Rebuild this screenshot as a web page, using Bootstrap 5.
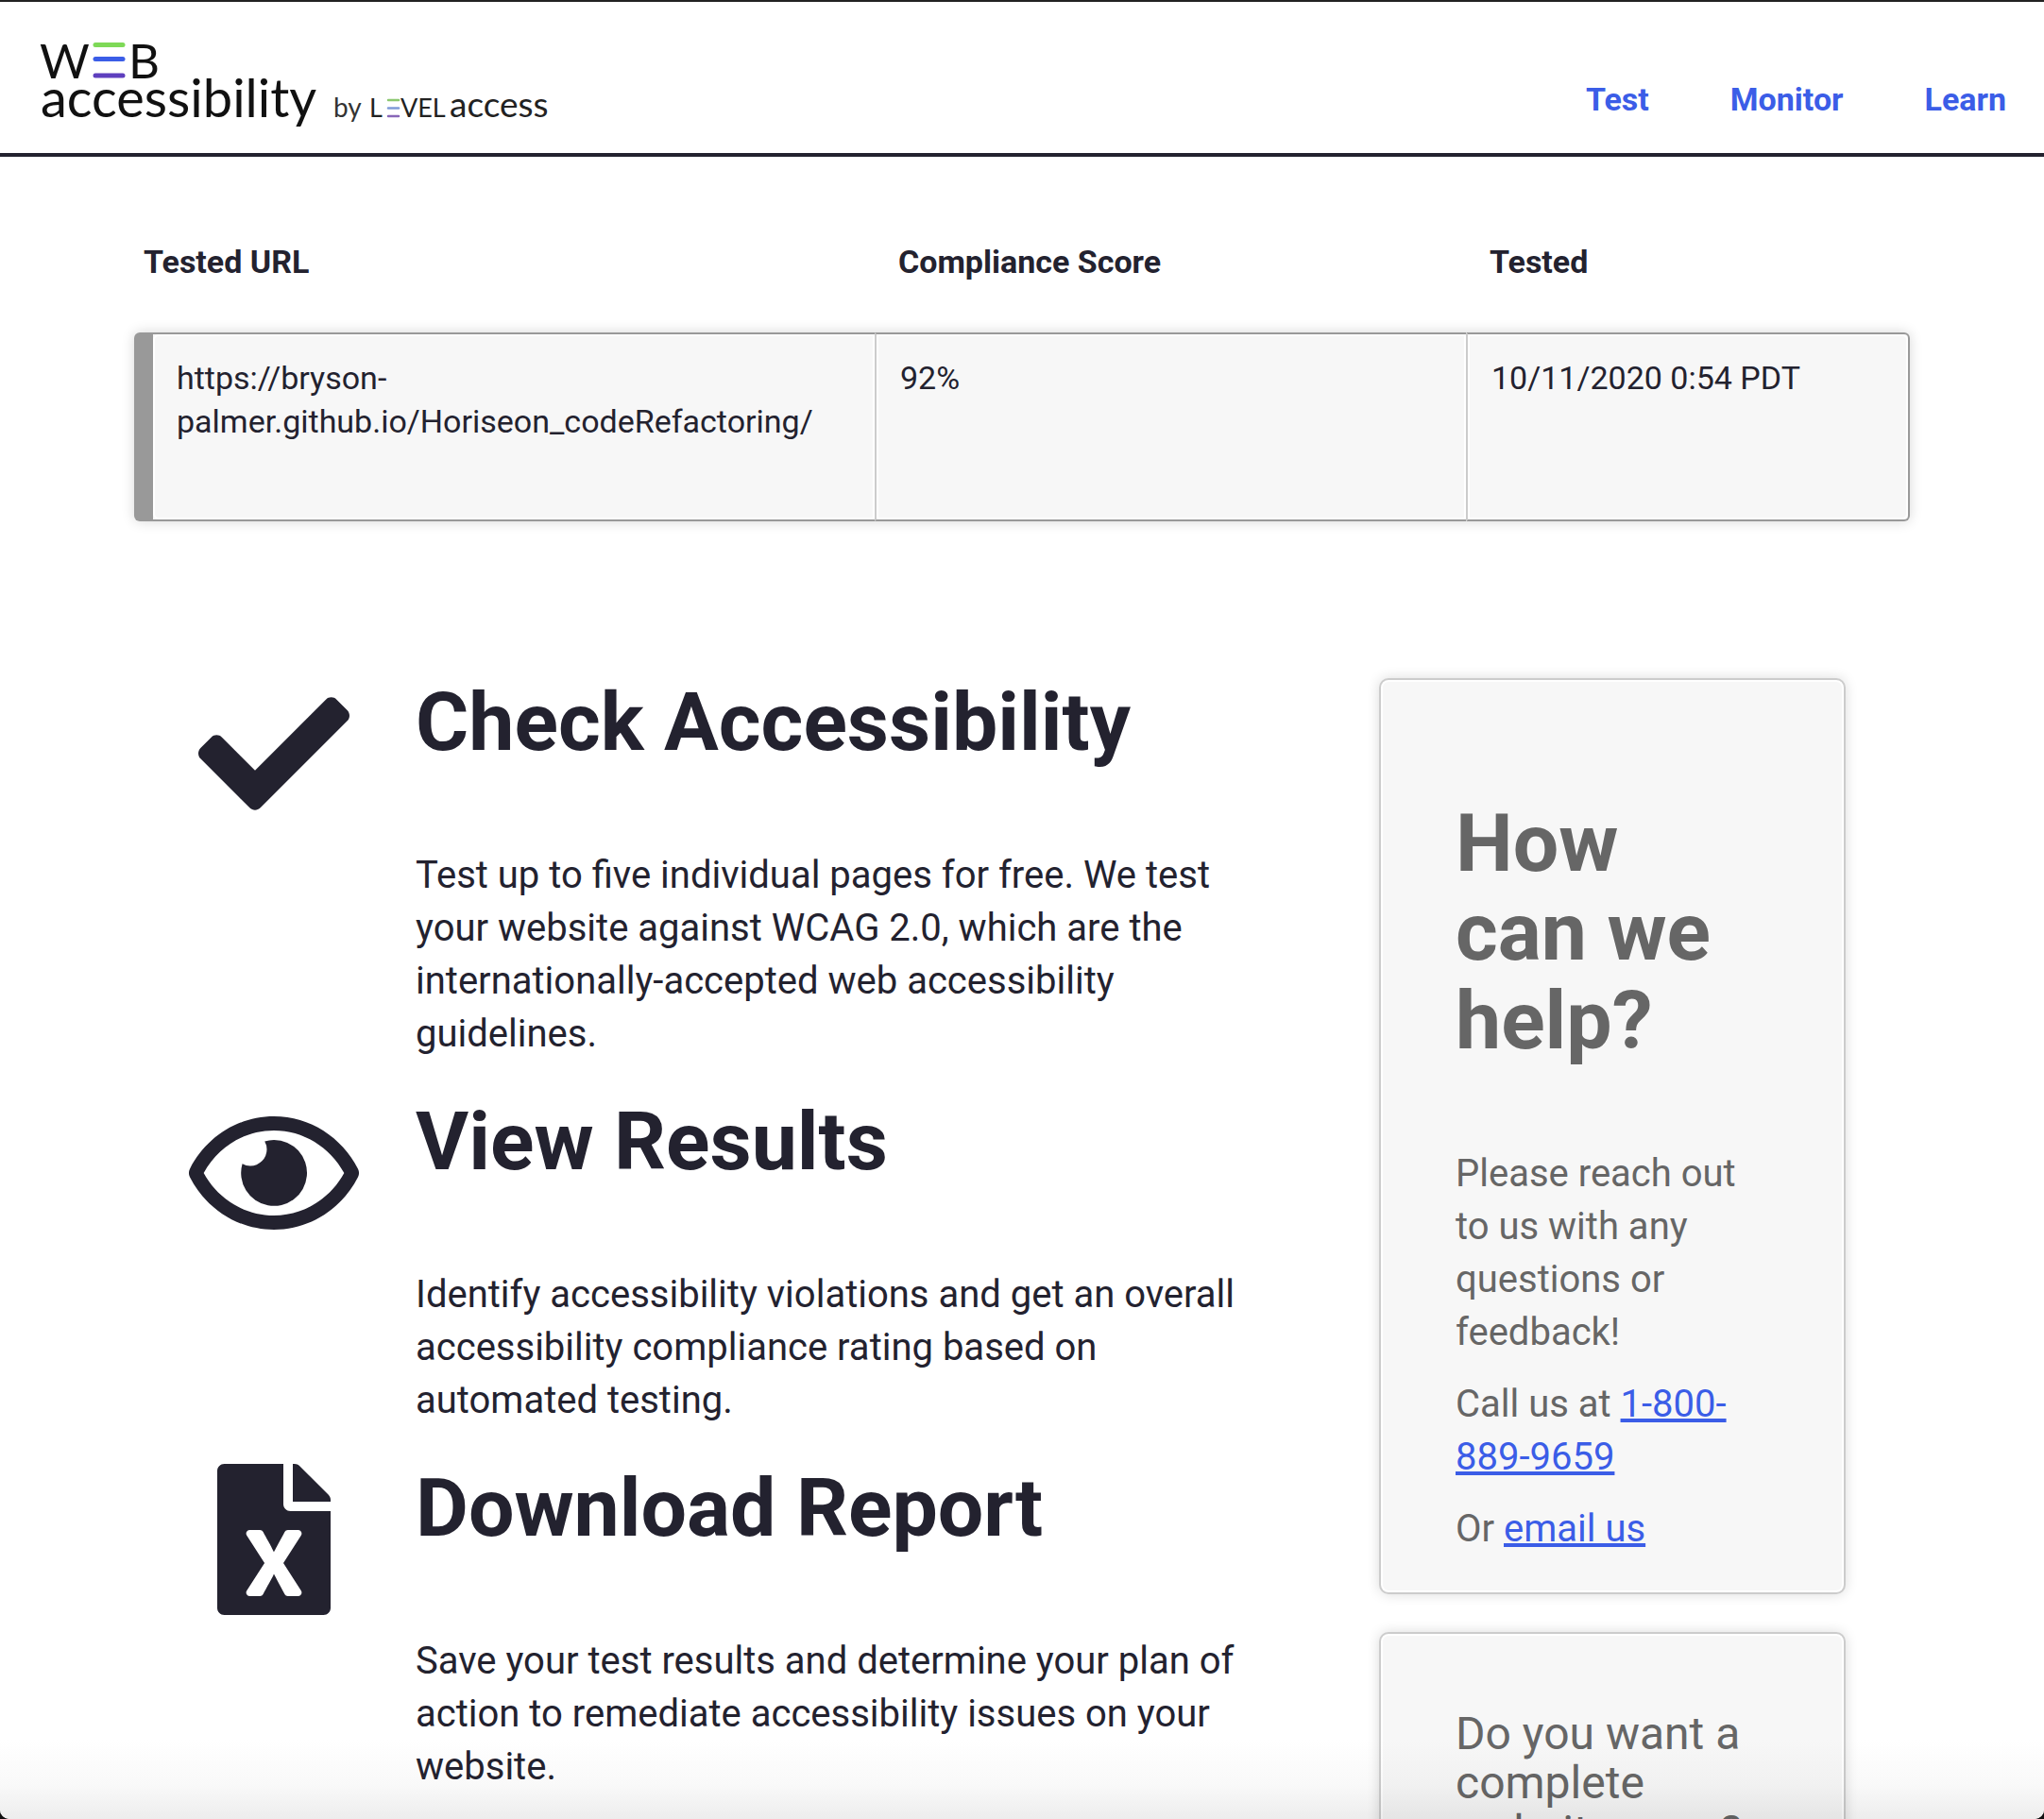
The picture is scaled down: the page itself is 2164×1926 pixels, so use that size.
<!DOCTYPE html>
<html lang="en">
<head>
<meta charset="utf-8">
<meta name="viewport" content="width=device-width, initial-scale=1">
<title>Web Accessibility by Level Access</title>
<link href="https://cdn.jsdelivr.net/npm/bootstrap@5.3.0/dist/css/bootstrap.min.css" rel="stylesheet">
<style>
:root{--ink:#23222f;--link:#3b5de7}
body{font-family:Roboto,"Liberation Sans",sans-serif;font-size:40px;line-height:56px;color:var(--ink);height:100vh;overflow:hidden}
a{color:var(--link)}
p{margin-bottom:20px}
.site-head{border-top:2px solid #222;border-bottom:4px solid var(--ink);padding:20px 40px}
.site-nav{gap:86px;padding-top:60px}
.site-nav a{font-size:34px;font-weight:700;line-height:46px;text-decoration:none}
.score{margin:82px 142px 0}
.score table{width:100%;border-collapse:separate;border-spacing:0;font-size:34px;line-height:46px;table-layout:fixed}
.score th{font-weight:700;padding:6px 25px 52px}
.score th:first-child{padding-left:10px}
.score td{height:200px;vertical-align:top;padding:23px 25px;background:#f7f7f7;border:solid #999;border-width:2px 0;box-shadow:inset 0 0 0 2px #fff}
.score td+td{border-left:2px solid #ccc}
.score td:first-child{border-left:20px solid #999;border-radius:6px 0 0 6px}
.score td:last-child{border-right:2px solid #999;border-radius:0 6px 6px 0}
.score tbody tr{box-shadow:0 0 14px rgba(0,0,0,.16);border-radius:6px}
.c-url{width:41.7%}.c-score{width:33.3%}.c-date{width:25%}
.main-area{padding:166px 210px 0 200px;gap:140px}
h2{font-size:86px;font-weight:700;line-height:94px;margin-bottom:87px}
.step{gap:60px;margin-bottom:19px}
.step-icon{width:180px;height:160px;fill:var(--ink)}
.side{width:494px}
.side-box{background:#f7f7f7;border:2px solid #ccc;border-radius:10px;box-shadow:inset 0 0 0 2px #fff,0 0 14px rgba(0,0,0,.14);padding:126px 79px 19px;margin-bottom:40px;color:#666}
.side-box.offer{padding-top:80px}
h3{font-size:48px;font-weight:400;line-height:52px}
.frame{inset:0;pointer-events:none;border-radius:0 0 10px 10px;box-shadow:0 0 0 20px #111;background:linear-gradient(to top,#ededed,#f9f9f9 36px,#fff 84px) bottom/100% 84px no-repeat;mix-blend-mode:multiply}
</style>
</head>
<body>
<header class="site-head d-flex justify-content-between align-items-start">
  <a href="#" aria-label="Web accessibility by Level Access">
    <svg class="d-block" width="560" height="120" viewBox="40 22 560 120" font-family="Lato, sans-serif" fill="#111">
      <text x="42" y="83" font-size="51">W</text>
      <g stroke-width="5" stroke-linecap="round"><path stroke="#7ed957" d="M101 47.500h29"/><path stroke="#3b5de7" d="M101 62.500h29"/><path stroke="#5e3fbe" d="M101 80h29"/></g>
      <text x="136" y="83" font-size="51">B</text>
      <text x="43" y="124" font-size="56">accessibility</text>
      <text x="353" y="124" font-size="28" fill="#333">by</text>
      <text x="391" y="124" font-size="27" fill="#222">L</text>
      <g stroke-width="2.500" stroke-linecap="round"><path stroke="#8cc870" d="M411 106h11"/><path stroke="#7f9ad8" d="M411 114.500h11"/><path stroke="#8866b8" d="M411 123h11"/></g>
      <text x="424" y="124" font-size="27" fill="#222">VEL</text>
      <text x="476" y="124" font-size="37" fill="#222">access</text>
    </svg>
  </a>
  <nav class="site-nav d-flex" aria-label="Main"><a href="#">Test</a><a href="#">Monitor</a><a href="#">Learn</a></nav>
</header>
<section class="score">
  <table>
    <thead><tr><th class="c-url" scope="col">Tested URL</th><th class="c-score" scope="col">Compliance Score</th><th class="c-date" scope="col">Tested</th></tr></thead>
    <tbody><tr><td>https://bryson-<br>palmer.github.io/Horiseon_codeRefactoring/</td><td>92%</td><td>10/11/2020 0:54 PDT</td></tr></tbody>
  </table>
</section>
<main class="main-area d-flex align-items-start">
  <div class="flex-grow-1">
    <section class="step d-flex align-items-start">
      <svg class="step-icon flex-shrink-0" viewBox="0 0 512 512" aria-hidden="true"><path d="M173.898 439.404l-166.400-166.400c-9.997-9.997-9.997-26.206 0-36.204l36.203-36.204c9.997-9.998 26.207-9.998 36.204 0L192 312.690 432.095 72.596c9.997-9.997 26.207-9.997 36.204 0l36.203 36.204c9.997 9.997 9.997 26.206 0 36.204l-294.400 294.401c-9.998 9.997-26.207 9.997-36.204-.001z"/></svg>
      <div><h2>Check Accessibility</h2><p>Test up to five individual pages for free. We test your website against WCAG 2.0, which are the internationally-accepted web accessibility guidelines.</p></div>
    </section>
    <section class="step d-flex align-items-start">
      <svg class="step-icon flex-shrink-0" viewBox="0 0 576 512" aria-hidden="true"><path d="M288 144a110.940 110.940 0 0 0-31.240 5 55.400 55.400 0 0 1 7.240 27 56 56 0 0 1-56 56 55.400 55.400 0 0 1-27-7.240A111.710 111.710 0 1 0 288 144zm284.520 97.400C518.290 135.590 410.930 64 288 64S57.680 135.640 3.480 241.410a32.350 32.350 0 0 0 0 29.190C57.710 376.410 165.070 448 288 448s230.320-71.640 284.520-177.410a32.350 32.350 0 0 0 0-29.190zM288 400c-98.650 0-189.090-55-237.930-144C98.910 167 189.340 112 288 112s189.090 55 237.930 144C477.100 345 386.660 400 288 400z"/></svg>
      <div><h2>View Results</h2><p>Identify accessibility violations and get an overall accessibility compliance rating based on automated testing.</p></div>
    </section>
    <section class="step d-flex align-items-start">
      <svg class="step-icon flex-shrink-0" viewBox="0 0 384 512" aria-hidden="true"><path d="M224 136V0H24C10.700 0 0 10.700 0 24v464c0 13.300 10.700 24 24 24h336c13.300 0 24-10.700 24-24V160H248c-13.200 0-24-10.800-24-24zm60.100 106.500L224 336l60.100 93.500c5.100 8-.6 18.500-10.100 18.500h-34.900c-4.400 0-8.500-2.400-10.600-6.300C208.900 405.500 192 373 192 373c-6.400 14.800-10 20-36.600 68.800-2.100 3.900-6.100 6.300-10.500 6.300H110c-9.500 0-15.200-10.500-10.100-18.500l60.300-93.500-60.300-93.500c-5.200-8 .6-18.500 10.100-18.500h34.800c4.400 0 8.500 2.400 10.600 6.300 26.100 48.800 20 33.600 36.600 68.500 0 0 6.100-11.700 36.600-68.500 2.100-3.900 6.200-6.300 10.600-6.300H274c9.500-.1 15.200 10.400 10.100 18.400zM384 121.900v6.100H256V0h6.100c6.400 0 12.500 2.500 17 7l97.900 98c4.500 4.500 7 10.600 7 16.900z"/></svg>
      <div><h2>Download Report</h2><p>Save your test results and determine your plan of action to remediate accessibility issues on your website.</p></div>
    </section>
  </div>
  <aside class="side flex-shrink-0">
    <section class="side-box">
      <h2>How can we help?</h2>
      <p>Please reach out to us with any questions or feedback!</p>
      <p>Call us at <a href="tel:18008899659">1-800-889-9659</a></p>
      <p>Or <a href="#">email us</a></p>
    </section>
    <section class="side-box offer"><h3>Do you want a complete website scan?</h3></section>
  </aside>
</main>
<div class="frame position-fixed"></div>
<script src="https://cdn.jsdelivr.net/npm/bootstrap@5.3.0/dist/js/bootstrap.bundle.min.js"></script>
</body>
</html>
